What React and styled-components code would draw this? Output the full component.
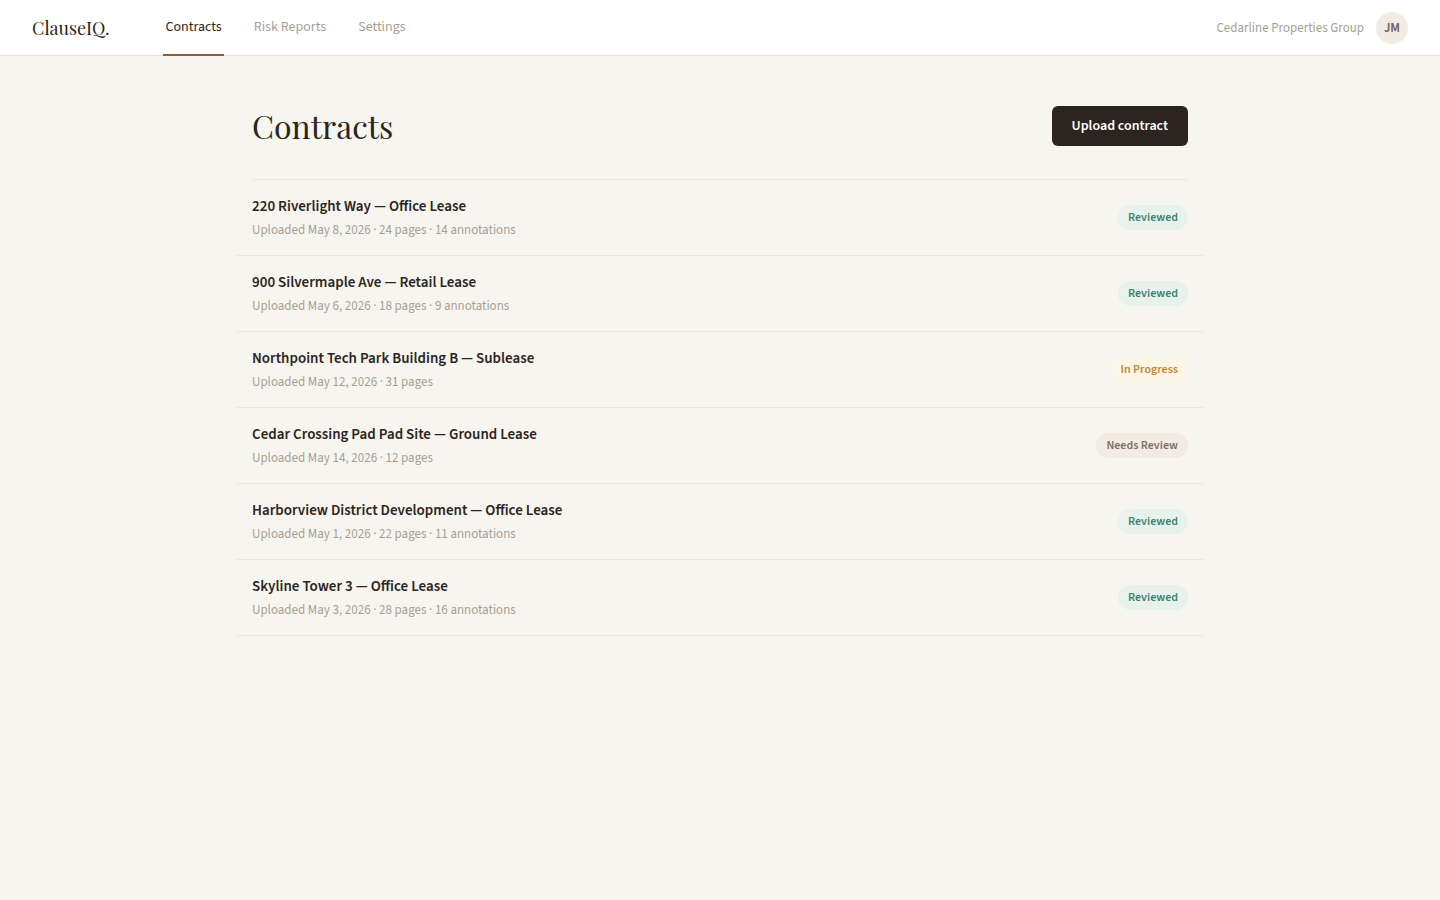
import styled, { createGlobalStyle } from "styled-components";

const GlobalStyle = createGlobalStyle`
  :root {
    --ink: #2c2420;
    --muted: #a89f94;
    --accent: #8f5b3a;
    --page: #f6f5f0;
    --sans: "Source Sans 3", "Noto Sans CJK JP", sans-serif;
    --serif: "Playfair Display", "Liberation Serif", serif;
  }

  *, *::before, *::after {
    box-sizing: border-box;
  }

  body {
    background: var(--page);
    color: var(--ink);
    font-family: var(--sans);
    margin: 0;
  }
`;

const TopBar = styled.header`
  background: #fff;
  border-bottom: 1px solid #e2dfd6;
  display: flex;
  height: 56px;
  padding: 0 32px;
`;

const Logo = styled.a`
  align-self: center;
  color: var(--ink);
  font-family: var(--serif);
  font-size: 18px;
  line-height: 24px;
  margin-right: 54px;
  text-decoration: none;
`;

const Nav = styled.nav`
  display: flex;
  gap: 28px;
  margin-bottom: -1px;
`;

const NavLink = styled.a`
  align-items: center;
  border-bottom: 2px solid
    ${({ $active }) => ($active ? "var(--accent)" : "transparent")};
  color: ${({ $active }) => ($active ? "var(--ink)" : "var(--muted)")};
  display: flex;
  font-size: 14px;
  padding: 0 2px;
  text-decoration: none;
`;

const Account = styled.div`
  align-items: center;
  color: var(--muted);
  display: flex;
  font-size: 13px;
  gap: 12px;
  margin-left: auto;
`;

const Avatar = styled.span`
  align-items: center;
  background: #f2ebe4;
  border-radius: 50%;
  color: #6b625c;
  display: flex;
  font-size: 13px;
  font-weight: 600;
  height: 32px;
  justify-content: center;
  width: 32px;
`;

const Main = styled.main`
  margin: 0 auto;
  max-width: 1000px;
  padding: 48px 32px;
`;

const PageHead = styled.div`
  align-items: center;
  display: flex;
  justify-content: space-between;
  margin-bottom: 31px;
`;

const Title = styled.h1`
  font-family: var(--serif);
  font-size: 32px;
  font-weight: 400;
  line-height: 44px;
  margin: 0;
`;

const UploadButton = styled.button`
  background: var(--ink);
  border: none;
  border-radius: 6px;
  color: #fff;
  cursor: pointer;
  font-family: inherit;
  font-size: 14px;
  font-weight: 600;
  line-height: 20px;
  padding: 10px 20px;
`;

const List = styled.ul`
  border-top: 1px solid #eae8e2;
  list-style: none;
  margin: 0;
  padding: 0;
`;

const Row = styled.li`
  align-items: center;
  border-bottom: 1px solid #eae8e2;
  display: flex;
  justify-content: space-between;
  margin: 0 -16px;
  padding: 14px 16px;
`;

const RowTitle = styled.a`
  color: var(--ink);
  display: block;
  font-size: 15px;
  font-weight: 600;
  line-height: 26px;
  text-decoration: none;
`;

const Meta = styled.p`
  color: var(--muted);
  font-size: 13px;
  line-height: 21px;
  margin: 0;
`;

const tones = {
  Reviewed: { background: "#e8f2ec", color: "#45806a" },
  "In Progress": { background: "#fdf5e6", color: "#c08a2e" },
  "Needs Review": { background: "#f2ebe4", color: "#7c7068" },
};

const Badge = styled.span`
  background: ${({ $status }) => tones[$status].background};
  border-radius: 20px;
  color: ${({ $status }) => tones[$status].color};
  font-size: 12px;
  font-weight: 600;
  line-height: 25px;
  padding: 0 10px;
  white-space: nowrap;
`;

const links = ["Contracts", "Risk Reports", "Settings"];

const contracts = [
  {
    name: "220 Riverlight Way — Office Lease",
    meta: "Uploaded May 8, 2026 · 24 pages · 14 annotations",
    status: "Reviewed",
  },
  {
    name: "900 Silvermaple Ave — Retail Lease",
    meta: "Uploaded May 6, 2026 · 18 pages · 9 annotations",
    status: "Reviewed",
  },
  {
    name: "Northpoint Tech Park Building B — Sublease",
    meta: "Uploaded May 12, 2026 · 31 pages",
    status: "In Progress",
  },
  {
    name: "Cedar Crossing Pad Pad Site — Ground Lease",
    meta: "Uploaded May 14, 2026 · 12 pages",
    status: "Needs Review",
  },
  {
    name: "Harborview District Development — Office Lease",
    meta: "Uploaded May 1, 2026 · 22 pages · 11 annotations",
    status: "Reviewed",
  },
  {
    name: "Skyline Tower 3 — Office Lease",
    meta: "Uploaded May 3, 2026 · 28 pages · 16 annotations",
    status: "Reviewed",
  },
];

const App = () => (
  <>
    <GlobalStyle />
    <TopBar>
      <Logo href="#">ClauseIQ.</Logo>
      <Nav>
        {links.map((link) => (
          <NavLink key={link} href="#" $active={link === "Contracts"}>
            {link}
          </NavLink>
        ))}
      </Nav>
      <Account>
        <span>Cedarline Properties Group</span>
        <Avatar>JM</Avatar>
      </Account>
    </TopBar>
    <Main>
      <PageHead>
        <Title>Contracts</Title>
        <UploadButton type="button">Upload contract</UploadButton>
      </PageHead>
      <List>
        {contracts.map(({ name, meta, status }) => (
          <Row key={name}>
            <div>
              <RowTitle href="#">{name}</RowTitle>
              <Meta>{meta}</Meta>
            </div>
            <Badge $status={status}>{status}</Badge>
          </Row>
        ))}
      </List>
    </Main>
  </>
);

export default App;
